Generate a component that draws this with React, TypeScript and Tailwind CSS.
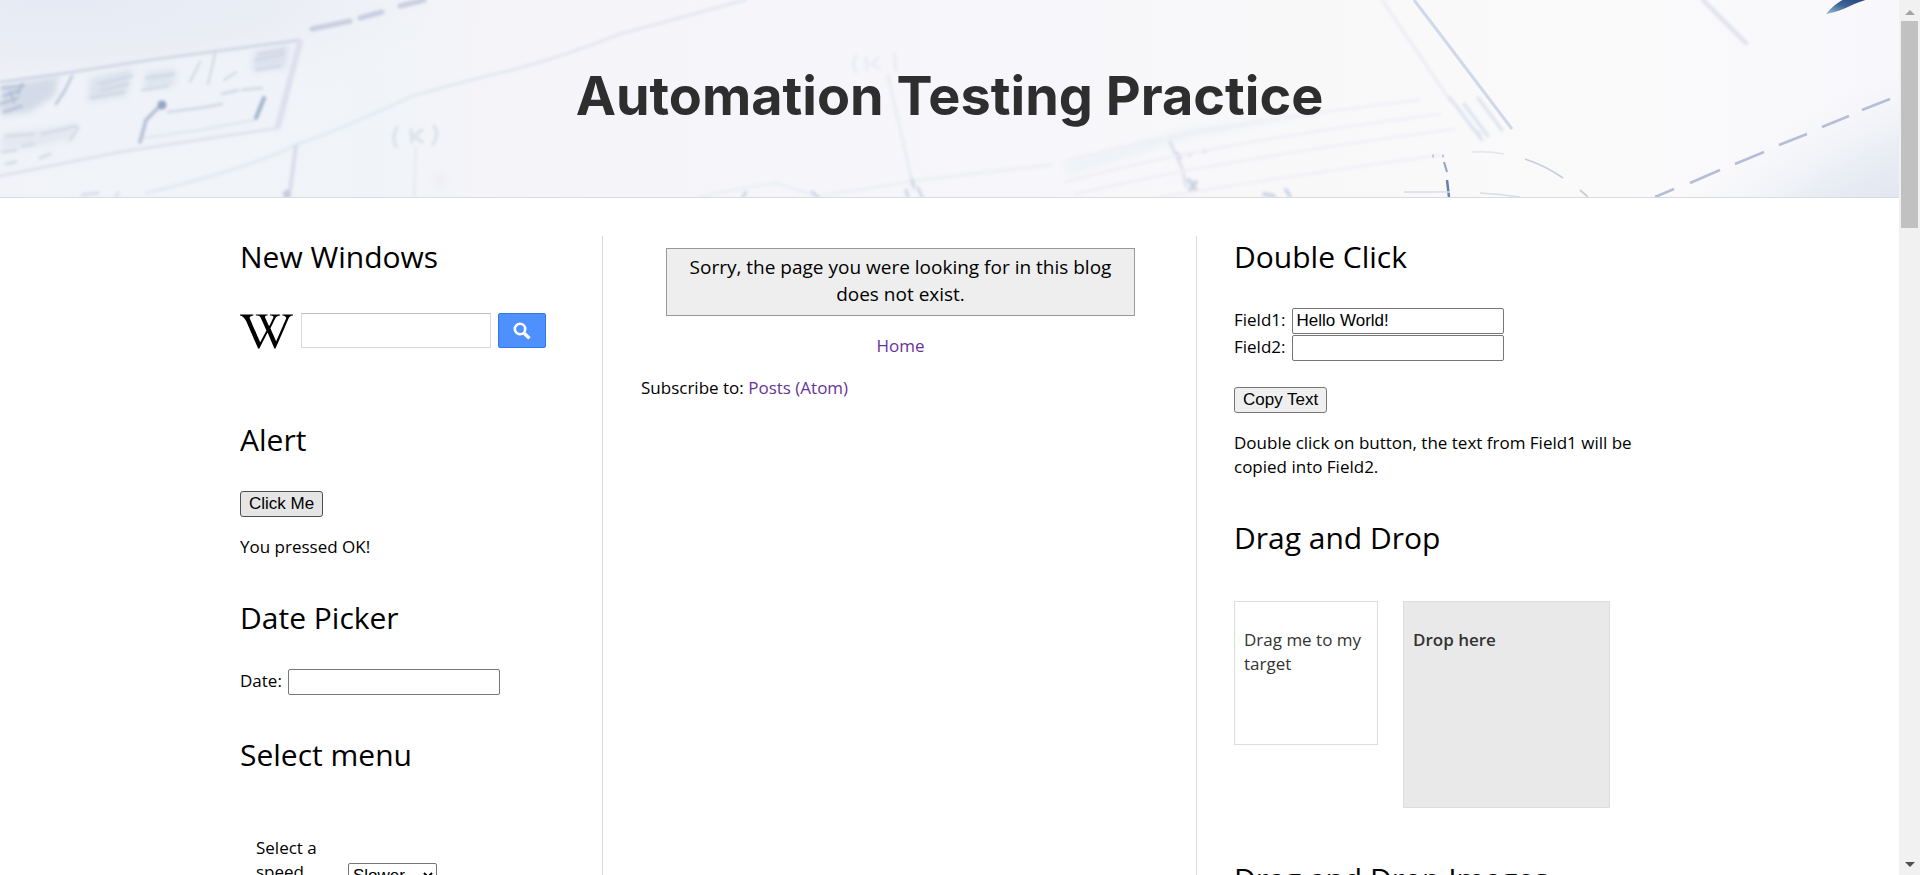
import { useState, type ReactNode } from "react";
import { FaWikipediaW } from "react-icons/fa";

const ruled = [
  [1065, 162, 1180, 128, 1420, 100],
  [1065, 182, 1200, 145, 1440, 114],
  [1075, 194, 1220, 160, 1455, 129],
  [1160, 197, 1290, 176, 1440, 155],
];

function Blueprint() {
  return (
    <svg
      className="absolute inset-0 h-full w-full"
      viewBox="0 0 1899 197"
      preserveAspectRatio="xMidYMid slice"
      fill="none"
      aria-hidden="true"
    >
      <defs>
        <linearGradient id="paper" x1="0" y1="0" x2="1" y2="0">
          <stop offset="0" stopColor="#f1f3f8" />
          <stop offset="0.2" stopColor="#f0f4f8" />
          <stop offset="0.26" stopColor="#f5f4f9" />
          <stop offset="0.55" stopColor="#f7f6fa" />
          <stop offset="0.68" stopColor="#f8f8f9" />
          <stop offset="0.85" stopColor="#fafafb" />
          <stop offset="1" stopColor="#f8f7fb" />
        </linearGradient>
        <radialGradient id="cornerLeft" gradientUnits="userSpaceOnUse" cx="0" cy="0" r="1" gradientTransform="translate(60 0) scale(430 110)">
          <stop offset="0" stopColor="#e4eaf4" />
          <stop offset="0.5" stopColor="#e9ecf4" stopOpacity="0.8" />
          <stop offset="1" stopColor="#f1f0f5" stopOpacity="0" />
        </radialGradient>
        <radialGradient id="cornerRight" gradientUnits="userSpaceOnUse" cx="0" cy="0" r="1" gradientTransform="translate(1899 210) rotate(-26) scale(320 130)">
          <stop offset="0" stopColor="#dfe5f0" />
          <stop offset="0.45" stopColor="#e9edf4" />
          <stop offset="1" stopColor="#f3f6f9" stopOpacity="0" />
        </radialGradient>
        <linearGradient id="nib" x1="0" y1="1" x2="1" y2="0">
          <stop offset="0" stopColor="#9dbcd3" />
          <stop offset="0.45" stopColor="#3d6494" />
          <stop offset="1" stopColor="#1d3c74" />
        </linearGradient>
        <filter id="soft" x="-20%" y="-20%" width="140%" height="140%">
          <feGaussianBlur stdDeviation="1.5" />
        </filter>
        <filter id="softer" x="-20%" y="-20%" width="140%" height="140%">
          <feGaussianBlur stdDeviation="3" />
        </filter>
        <filter id="fine" x="-20%" y="-20%" width="140%" height="140%">
          <feGaussianBlur stdDeviation="0.6" />
        </filter>
      </defs>
      <rect width="1899" height="197" fill="url(#paper)" />
      <rect width="600" height="120" fill="url(#cornerLeft)" />
      <rect x="1500" width="399" height="197" fill="url(#cornerRight)" />

      <g filter="url(#softer)">
        <path d="M0 84 298 42 284 126 0 170Z" fill="#eff2f8" />
        <path d="M0 86 60 76 54 96 30 112 0 116Z" fill="#d3dbe8" />
        <path d="M90 78 134 68 126 96 88 102Z" fill="#dbe2ed" />
        <path d="M146 72 176 68 174 86 144 90Z" fill="#dde4ee" />
        <path d="M254 52 290 44 286 68 252 72Z" fill="#dbe2ee" />
        <path d="M2 134 78 124 74 138 40 146 0 150Z" fill="#e3e8f1" />
        <path d="M1064 164 1190 128 1330 112 1190 138 1068 176Z" fill="#edf3f6" />
        <circle cx="440" cy="180" r="8" fill="#efeff5" />
      </g>

      <g filter="url(#soft)" strokeLinecap="round">
        <path d="M0 82 60 74 150 60 300 40" stroke="#cdd3e4" strokeWidth="2.5" />
        <path d="M300 42 278 126" stroke="#dfdfed" strokeWidth="6" />
        <path d="M0 176 120 152 278 128" stroke="#e0e2eb" strokeWidth="3" />
        <path d="M312 29 350 21M360 18 382 12M400 6 424 0" stroke="#c8cde0" strokeWidth="5" />
        <path d="M2 88 24 86M4 96 20 90M0 104 18 98M4 112 22 106M10 92 14 102M22 84 18 94" stroke="#adbbd2" strokeWidth="2.2" />
        <path d="M72 76 64 92 56 104" stroke="#b9c5d8" strokeWidth="2.5" />
        <path
          d="M90 98 124 92M100 84 132 76M102 90 128 84M146 78 174 74M142 90 168 86M200 62 190 82M215 54 208 84M224 80 236 72M256 60 284 54M256 70 280 66M258 54 284 50"
          stroke="#cdd5e3"
          strokeWidth="2"
        />
        <path
          d="M6 136 34 134M42 134 76 126M70 140 78 128M2 152 16 150M22 146 34 144M40 158 50 154M6 164 16 162"
          stroke="#d5dce8"
          strokeWidth="3"
        />
        <path d="M160 106 146 120 140 142" stroke="#b4c0d4" strokeWidth="3.5" />
        <circle cx="162" cy="105" r="4.5" fill="#93a5c1" />
        <path d="M264 98 256 118" stroke="#a3b2cb" strokeWidth="4" />
        <path d="M222 94 238 90M242 90 262 88M168 112 200 108 222 104" stroke="#cfd7e4" strokeWidth="2.5" />
        <path d="M144 138 200 130 254 120" stroke="#dfe3ec" strokeWidth="2" />
        <path d="M146 193Q250 168 296 145Q350 126 412 96Q460 82 520 68Q570 54 620 34L745 0" stroke="#e2e9ee" strokeWidth="3" />
        <path d="M296 146 290 190" stroke="#dadceb" strokeWidth="4" />
        <circle cx="287" cy="194" r="4" fill="#c6cbde" />
        <path d="M82 195 98 193M116 196 118 193" stroke="#d9dde8" strokeWidth="3" />
        <path
          d="M397 128Q391 137 396 146M434 126Q440 134 433 144M411 130 412 142M422 130 414 136 422 142"
          stroke="#dde3ea"
          strokeWidth="3.5"
        />
        <path d="M416 148 414 197" stroke="#e7edf1" strokeWidth="3" />
        <path d="M856 56Q851 64 856 72M894 54 896 70M866 58 867 70M878 58 871 64 880 69M888 76 914 190" stroke="#e7edf1" strokeWidth="3" />
        <path d="M700 197Q730 190 776 183L816 196M820 196 920 180 1050 165" stroke="#eaf0f3" strokeWidth="3" />
        <path d="M743 197 746 192M812 192 818 197M906 190 908 197M918 188 922 197M912 180 914 186" stroke="#d0d6e5" strokeWidth="3" />
        <path d="M1170 142 1182 168 1186 186" stroke="#dbe1eb" strokeWidth="3" />
        <path
          d="M1177 154 1180 157M1189 154 1190 154M1204 151 1205 151M1189 180 1196 190M1196 182 1190 190M1264 194 1274 196M1286 190 1290 196"
          stroke="#cdd4e4"
          strokeWidth="4"
        />
        {ruled.map(([x1, y1, cx, cy, x2, y2]) => (
          <path key={y1} d={`M${x1} ${y1}Q${cx} ${cy} ${x2} ${y2}`} stroke="#f0eef5" strokeWidth="2.5" />
        ))}
        <path d="M1382 0 1450 100" stroke="#edebf3" strokeWidth="3" />
        <path d="M1450 98 1482 140M1464 104 1488 136M1478 98 1502 130M1472 128 1480 134" stroke="#dbe2ed" strokeWidth="3" />
        <path d="M1703 0 1746 43" stroke="#dde2ee" strokeWidth="4" />
      </g>

      <g filter="url(#fine)">
        <path d="M1414 0 1440 34 1512 129" stroke="#cfd9e9" strokeWidth="3" />
        <path d="M1432 156 1434 156M1442 156 1444 156" stroke="#c2c9dd" strokeWidth="3" />
        <path d="M1444 162 1447 172" stroke="#8fa3c4" strokeWidth="2" />
        <path d="M1447 180 1449 197" stroke="#6382b1" strokeWidth="2.5" />
        <path d="M1472 152Q1490 151 1504 154" stroke="#e2e5ec" strokeWidth="1.5" />
        <path d="M1525 159Q1546 166 1563 178M1580 190 1588 197" stroke="#c9cedc" strokeWidth="1.8" />
        <path d="M1404 192 1450 192M1480 193Q1500 194 1520 197" stroke="#d9dde6" strokeWidth="1.5" />
        <path
          d="M1655 197 1674 189M1690 183 1720 170M1735 164 1764 152M1779 145 1807 134M1822 127 1849 116M1862 110 1890 99"
          stroke="#b6bed7"
          strokeWidth="2.6"
        />
        <path d="M1826 14Q1834 4 1846 -2L1872 -2Q1858 2 1850 6Q1838 12 1826 14Z" fill="url(#nib)" />
      </g>
    </svg>
  );
}

function Section({ title, className = "", children }: { title: string; className?: string; children?: ReactNode }) {
  return (
    <section className={`mb-[38px] ${className}`}>
      <h2 className="mb-[30px] text-[30px] leading-[42px] whitespace-nowrap">{title}</h2>
      {children}
    </section>
  );
}

const fieldRow = "flex h-[27px] items-start gap-[6px]";
const field =
  "h-[26px] w-[212px] rounded-[2px] border border-[#767676] bg-white px-1 font-['Liberation_Sans',sans-serif] text-[17px] outline-none";
const button =
  "h-[26px] rounded-[3px] border px-2 font-['Liberation_Sans',sans-serif] text-[17px] leading-6";

function ScrollBar() {
  return (
    <div className="flex w-[21px] shrink-0 flex-col bg-[#f1f1f1] px-[2px]" aria-hidden="true">
      <div className="flex h-[21px] shrink-0 items-center justify-center pt-1">
        <svg width="10" height="5" viewBox="0 0 10 5">
          <path d="M5 0 10 5H0Z" fill="#a3a3a3" />
        </svg>
      </div>
      <div className="h-[207px] bg-[#c1c1c1]" />
      <div className="flex-1" />
      <div className="flex h-[21px] shrink-0 items-center justify-center">
        <svg width="10" height="5" viewBox="0 0 10 5">
          <path d="M0 0H10L5 5Z" fill="#505050" />
        </svg>
      </div>
    </div>
  );
}

export default function App() {
  const [first, setFirst] = useState("Hello World!");
  const [second, setSecond] = useState("");

  return (
    <div className="flex h-screen overflow-hidden bg-white font-['Open_Sans',sans-serif] text-[17px] leading-6 text-black">
      <div className="min-w-0 flex-1 overflow-hidden">
        <header className="relative flex h-[198px] items-center justify-center border-b border-[#d9dbe0] pb-1.5">
          <Blueprint />
          <h1 className="relative font-[Inter,sans-serif] text-[54px] leading-none font-bold text-[#2e2e2e]">
            Automation Testing Practice
          </h1>
        </header>

        <div className="mx-auto mt-[38px] flex max-w-[1419px]">
          <aside className="w-[363px] shrink-0 border-r border-[#d9d9d9] pr-9">
            <Section title="New Windows" className="pb-[33px]">
              <form className="mt-[35px] flex items-center" onSubmit={(e) => e.preventDefault()}>
                <FaWikipediaW className="-mt-[3px] -mb-[5px] mr-2 h-[43px] w-[53px]" aria-hidden="true" />
                <input
                  aria-label="Search Wikipedia"
                  className="h-[35px] w-[190px] border border-[#d9d9d9] border-t-[#c0c0c0] px-2 outline-none"
                />
                <button
                  type="submit"
                  aria-label="Search"
                  className="ml-[7px] flex h-[35px] w-12 items-center justify-center rounded-[2px] border border-[#3079ed] bg-[#4d90fe]"
                >
                  <svg width="18" height="18" viewBox="0 0 18 18" fill="none" stroke="#fff" aria-hidden="true">
                    <circle cx="7" cy="7" r="5.2" strokeWidth="2.6" />
                    <path d="M11 11 16.4 16.4" strokeWidth="3.4" />
                  </svg>
                </button>
              </form>
            </Section>
            <Section title="Alert">
              <button type="button" className={`${button} block border-[#4f4f4f] bg-[#e5e5e5]`}>
                Click Me
              </button>
              <p className="mt-[18px]">You pressed OK!</p>
            </Section>
            <Section title="Date Picker">
              <div className={fieldRow}>
                <label htmlFor="date">Date:</label>
                <input id="date" className={field} />
              </div>
            </Section>
            <Section title="Select menu">
              <div className="flex items-start gap-[30px] pt-[30px] pl-4">
                <label htmlFor="speed" className="w-[62px]">
                  Select a speed
                </label>
                <select
                  id="speed"
                  defaultValue="Slower"
                  className="mt-[27px] h-[25px] w-[89px] rounded-[2px] border border-[#767676] bg-white font-['Liberation_Sans',sans-serif] text-[17px]"
                >
                  <option>Slower</option>
                  <option>Slow</option>
                  <option>Medium</option>
                  <option>Fast</option>
                  <option>Faster</option>
                </select>
              </div>
            </Section>
          </aside>

          <main className="min-w-0 flex-1 pt-3 pr-9 pl-[38px]">
            <div className="mx-[25px] h-[68px] border border-[#999999] bg-[#eeeeee] px-3 pt-[5px] text-center text-[19px] leading-[27px]">
              Sorry, the page you were looking for in this blog does not exist.
            </div>
            <div className="mt-[18px] text-center">
              <a href="#home" className="text-[#663399]">
                Home
              </a>
            </div>
            <div className="mt-[18px]">
              Subscribe to:{" "}
              <a href="#feed" className="text-[#663399]">
                Posts (Atom)
              </a>
            </div>
          </main>

          <aside className="w-[463px] shrink-0 border-l border-[#d9d9d9] pl-[37px]">
            <Section title="Double Click">
              <div className={fieldRow}>
                <label htmlFor="field1">Field1:</label>
                <input id="field1" className={field} value={first} onChange={(e) => setFirst(e.target.value)} />
              </div>
              <div className={fieldRow}>
                <label htmlFor="field2">Field2:</label>
                <input id="field2" className={field} value={second} onChange={(e) => setSecond(e.target.value)} />
              </div>
              <button
                type="button"
                className={`${button} mt-[25px] block border-[#767676] bg-[#efefef]`}
                onDoubleClick={() => setSecond(first)}
              >
                Copy Text
              </button>
              <p className="mt-[18px]">Double click on button, the text from Field1 will be copied into Field2.</p>
            </Section>
            <Section title="Drag and Drop" className="pb-3">
              <div className="mt-[42px] flex items-start gap-[25px] text-[#333333]">
                <div className="h-36 w-36 border border-[#dddddd] px-[9px] py-[26px]">Drag me to my target</div>
                <div className="h-[207px] w-[207px] border border-[#dddddd] bg-[#e9e9e9] px-[9px] py-[26px] font-semibold">
                  Drop here
                </div>
              </div>
            </Section>
            <Section title="Drag and Drop Images" />
          </aside>
        </div>
      </div>
      <ScrollBar />
    </div>
  );
}
